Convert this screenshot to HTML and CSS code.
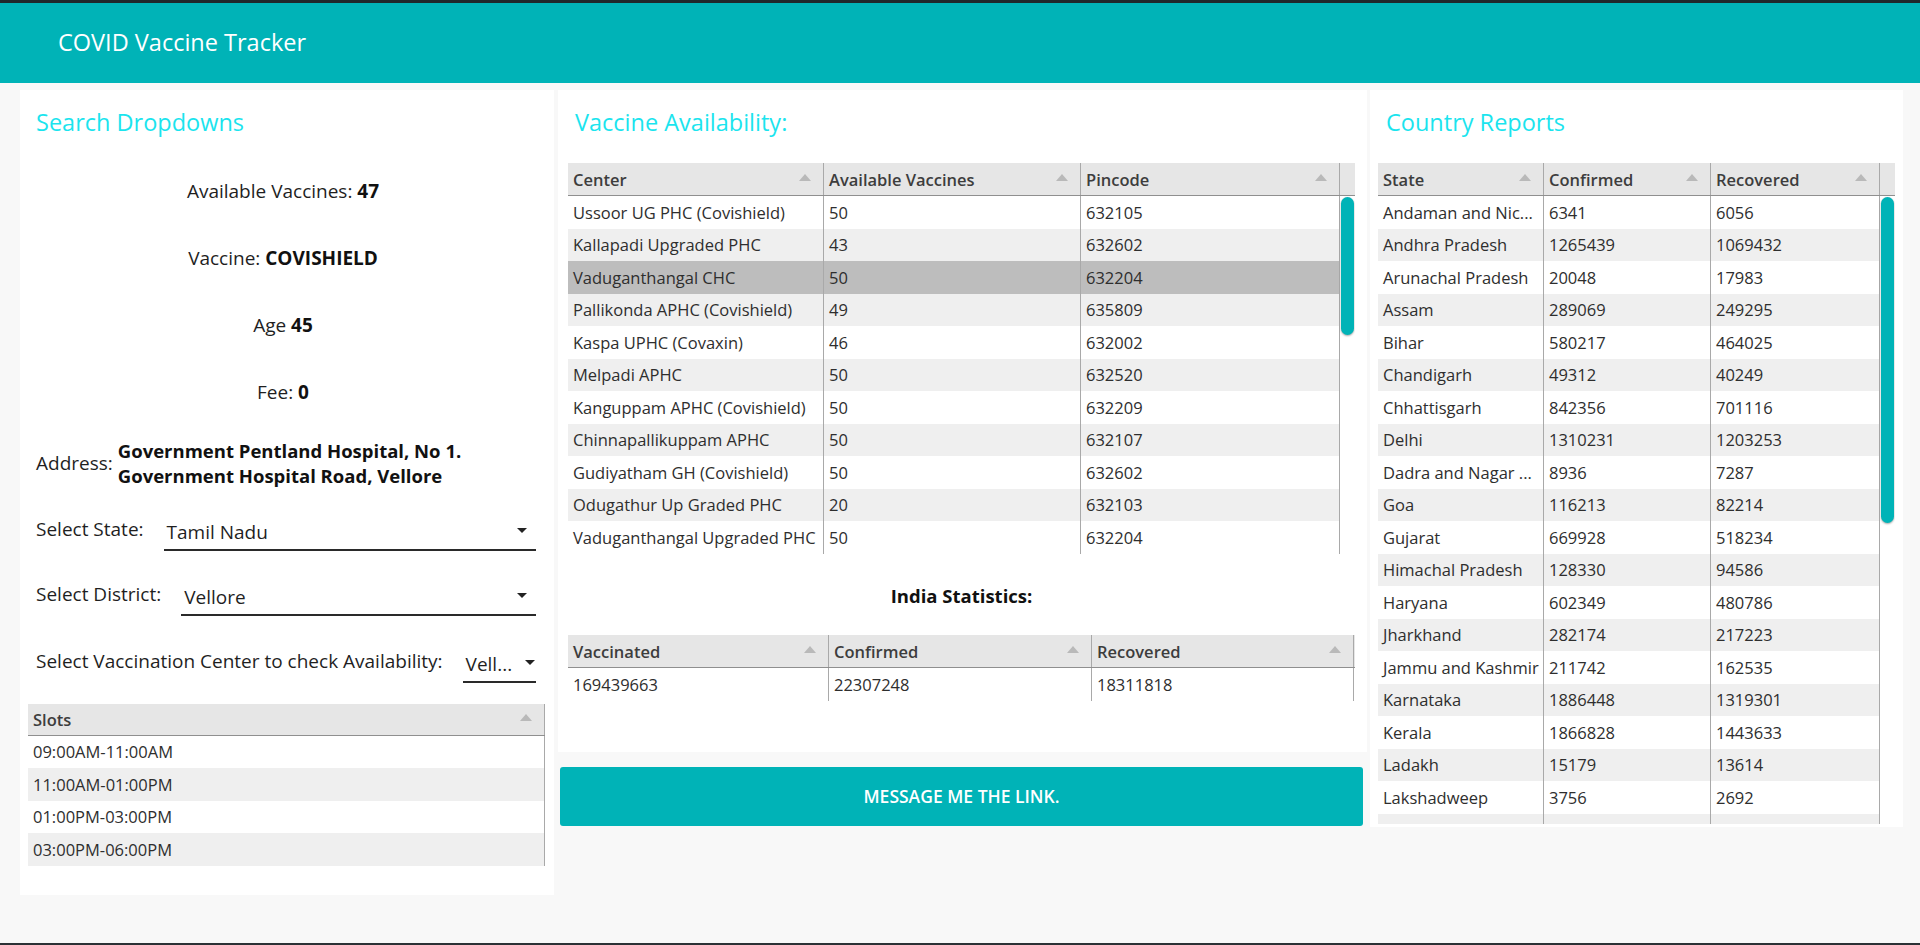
FILE: index.html
```html
<!DOCTYPE html>
<html lang="en">
<head>
<meta charset="utf-8">
<title>COVID Vaccine Tracker</title>
<link rel="stylesheet" href="styles.css">
</head>
<body>
<header class="appbar"><h1 class="app-title">COVID Vaccine Tracker</h1></header>
<main class="layout">
  <section class="panel panel-search">
    <h2 class="panel-title">Search Dropdowns</h2>
    <div class="info"><span>Available Vaccines: <b>47</b></span></div>
    <div class="info"><span>Vaccine: <b>COVISHIELD</b></span></div>
    <div class="info"><span>Age <b>45</b></span></div>
    <div class="info"><span>Fee: <b>0</b></span></div>
    <div class="address">
      <span class="address-label">Address:</span>
      <b class="address-text">Government Pentland Hospital, No 1.<br>Government Hospital Road, Vellore</b>
    </div>
    <div class="field field-state">
      <span class="field-label">Select State:</span>
      <div class="combo"><span class="combo-text">Tamil Nadu</span><span class="caret"></span></div>
    </div>
    <div class="field field-district">
      <span class="field-label">Select District:</span>
      <div class="combo"><span class="combo-text">Vellore</span><span class="caret"></span></div>
    </div>
    <div class="field field-center">
      <span class="field-label">Select Vaccination Center to check Availability:</span>
      <div class="combo combo-narrow"><span class="combo-text">Vell...</span><span class="caret"></span></div>
    </div>
    <div class="dg dg-slots">
      <div class="dg-head">
        <div class="hcell w-slot">Slots<span class="sort"></span></div>
      </div>
      <div class="dg-body">
        <div class="dg-rows">
          <div class="row"><div class="cell w-slot">09:00AM-11:00AM</div></div>
          <div class="row"><div class="cell w-slot">11:00AM-01:00PM</div></div>
          <div class="row"><div class="cell w-slot">01:00PM-03:00PM</div></div>
          <div class="row"><div class="cell w-slot">03:00PM-06:00PM</div></div>
        </div>
      </div>
    </div>
  </section>

  <div class="middle">
    <section class="panel panel-avail">
      <h2 class="panel-title">Vaccine Availability:</h2>
      <div class="dg dg-centers">
        <div class="dg-head">
          <div class="hcell w-c1">Center<span class="sort"></span></div>
          <div class="hcell w-c2">Available Vaccines<span class="sort"></span></div>
          <div class="hcell w-c3">Pincode<span class="sort"></span></div>
          <div class="hcell w-scroll"></div>
        </div>
        <div class="dg-body body-centers">
          <div class="dg-rows">
            <div class="row"><div class="cell w-c1">Ussoor UG PHC (Covishield)</div><div class="cell w-c2">50</div><div class="cell w-c3">632105</div></div>
            <div class="row"><div class="cell w-c1">Kallapadi Upgraded PHC</div><div class="cell w-c2">43</div><div class="cell w-c3">632602</div></div>
            <div class="row selected"><div class="cell w-c1">Vaduganthangal CHC</div><div class="cell w-c2">50</div><div class="cell w-c3">632204</div></div>
            <div class="row"><div class="cell w-c1">Pallikonda APHC (Covishield)</div><div class="cell w-c2">49</div><div class="cell w-c3">635809</div></div>
            <div class="row"><div class="cell w-c1">Kaspa UPHC (Covaxin)</div><div class="cell w-c2">46</div><div class="cell w-c3">632002</div></div>
            <div class="row"><div class="cell w-c1">Melpadi APHC</div><div class="cell w-c2">50</div><div class="cell w-c3">632520</div></div>
            <div class="row"><div class="cell w-c1">Kanguppam APHC (Covishield)</div><div class="cell w-c2">50</div><div class="cell w-c3">632209</div></div>
            <div class="row"><div class="cell w-c1">Chinnapallikuppam APHC</div><div class="cell w-c2">50</div><div class="cell w-c3">632107</div></div>
            <div class="row"><div class="cell w-c1">Gudiyatham GH (Covishield)</div><div class="cell w-c2">50</div><div class="cell w-c3">632602</div></div>
            <div class="row"><div class="cell w-c1">Odugathur Up Graded PHC</div><div class="cell w-c2">20</div><div class="cell w-c3">632103</div></div>
            <div class="row"><div class="cell w-c1">Vaduganthangal Upgraded PHC</div><div class="cell w-c2">50</div><div class="cell w-c3">632204</div></div>
          </div>
          <div class="scroll-track"><div class="thumb thumb-centers"></div></div>
        </div>
      </div>

      <h3 class="stats-title">India Statistics:</h3>
      <div class="dg dg-stats">
        <div class="dg-head">
          <div class="hcell w-s1">Vaccinated<span class="sort"></span></div>
          <div class="hcell w-s2">Confirmed<span class="sort"></span></div>
          <div class="hcell w-s3">Recovered<span class="sort"></span></div>
        </div>
        <div class="dg-body">
          <div class="dg-rows">
            <div class="row"><div class="cell w-s1">169439663</div><div class="cell w-s2">22307248</div><div class="cell w-s3">18311818</div></div>
          </div>
        </div>
      </div>
    </section>
    <button class="btn-message" type="button">MESSAGE ME THE LINK.</button>
  </div>

  <section class="panel panel-country">
    <h2 class="panel-title">Country Reports</h2>
    <div class="dg dg-country">
      <div class="dg-head">
        <div class="hcell w-r1">State<span class="sort"></span></div>
        <div class="hcell w-r2">Confirmed<span class="sort"></span></div>
        <div class="hcell w-r3">Recovered<span class="sort"></span></div>
        <div class="hcell w-scroll"></div>
      </div>
      <div class="dg-body body-country">
        <div class="dg-rows">
          <div class="row"><div class="cell w-r1">Andaman and Nic...</div><div class="cell w-r2">6341</div><div class="cell w-r3">6056</div></div>
          <div class="row"><div class="cell w-r1">Andhra Pradesh</div><div class="cell w-r2">1265439</div><div class="cell w-r3">1069432</div></div>
          <div class="row"><div class="cell w-r1">Arunachal Pradesh</div><div class="cell w-r2">20048</div><div class="cell w-r3">17983</div></div>
          <div class="row"><div class="cell w-r1">Assam</div><div class="cell w-r2">289069</div><div class="cell w-r3">249295</div></div>
          <div class="row"><div class="cell w-r1">Bihar</div><div class="cell w-r2">580217</div><div class="cell w-r3">464025</div></div>
          <div class="row"><div class="cell w-r1">Chandigarh</div><div class="cell w-r2">49312</div><div class="cell w-r3">40249</div></div>
          <div class="row"><div class="cell w-r1">Chhattisgarh</div><div class="cell w-r2">842356</div><div class="cell w-r3">701116</div></div>
          <div class="row"><div class="cell w-r1">Delhi</div><div class="cell w-r2">1310231</div><div class="cell w-r3">1203253</div></div>
          <div class="row"><div class="cell w-r1">Dadra and Nagar ...</div><div class="cell w-r2">8936</div><div class="cell w-r3">7287</div></div>
          <div class="row"><div class="cell w-r1">Goa</div><div class="cell w-r2">116213</div><div class="cell w-r3">82214</div></div>
          <div class="row"><div class="cell w-r1">Gujarat</div><div class="cell w-r2">669928</div><div class="cell w-r3">518234</div></div>
          <div class="row"><div class="cell w-r1">Himachal Pradesh</div><div class="cell w-r2">128330</div><div class="cell w-r3">94586</div></div>
          <div class="row"><div class="cell w-r1">Haryana</div><div class="cell w-r2">602349</div><div class="cell w-r3">480786</div></div>
          <div class="row"><div class="cell w-r1">Jharkhand</div><div class="cell w-r2">282174</div><div class="cell w-r3">217223</div></div>
          <div class="row"><div class="cell w-r1">Jammu and Kashmir</div><div class="cell w-r2">211742</div><div class="cell w-r3">162535</div></div>
          <div class="row"><div class="cell w-r1">Karnataka</div><div class="cell w-r2">1886448</div><div class="cell w-r3">1319301</div></div>
          <div class="row"><div class="cell w-r1">Kerala</div><div class="cell w-r2">1866828</div><div class="cell w-r3">1443633</div></div>
          <div class="row"><div class="cell w-r1">Ladakh</div><div class="cell w-r2">15179</div><div class="cell w-r3">13614</div></div>
          <div class="row"><div class="cell w-r1">Lakshadweep</div><div class="cell w-r2">3756</div><div class="cell w-r3">2692</div></div>
          <div class="row"><div class="cell w-r1"></div><div class="cell w-r2"></div><div class="cell w-r3"></div></div>
        </div>
        <div class="scroll-track"><div class="thumb thumb-country"></div></div>
      </div>
    </div>
  </section>
</main>
</body>
</html>
```

FILE: styles.css
```css
* { box-sizing: border-box; }

html, body {
  margin: 0;
  padding: 0;
}

body {
  height: 945px;
  overflow: hidden;
  background: #f8f8f8;
  font-family: "Open Sans", "Noto Sans", "Liberation Sans", sans-serif;
  font-size: 16.5px;
  color: #1f1f1f;
  border-bottom: 2px solid #2b3135;
}

/* ---------- app bar ---------- */
.appbar {
  height: 83px;
  background: #00b3b7;
  border-top: 3px solid #1f282b;
  display: flex;
  align-items: center;
  padding-left: 58px;
}

.app-title {
  margin: 0;
  font-size: 23.5px;
  font-weight: 400;
  color: #ffffff;
  line-height: 32px;
  padding-bottom: 3px;
}

/* ---------- layout ---------- */
.layout {
  display: flex;
  align-items: flex-start;
  padding: 7px 0 0 20px;
}

.panel {
  background: #ffffff;
}

.panel-title {
  margin: 16px 0 0 0;
  line-height: 32px;
  font-size: 23.5px;
  font-weight: 500;
  color: #1be4ee;
}

/* ---------- left panel ---------- */
.panel-search {
  width: 534px;
  height: 805px;
  padding: 0 8px;
  font-size: 19px;
}

.panel-search .panel-title { margin-left: 8px; }

.info {
  height: 67px;
  line-height: 67px;
  text-align: center;
  padding-right: 8px;
  white-space: nowrap;
}
.panel-title + .info { margin-top: 19.5px; }

.info b { font-weight: 700; color: #111; }

.address {
  margin-top: 12px;
  display: flex;
  align-items: center;
  padding-left: 8px;
  height: 50px;
}

.address-label { margin-right: 5px; }

.address-text {
  line-height: 25px;
  font-size: 18.5px;
  font-weight: 700;
  color: #111;
}

.field {
  display: flex;
  align-items: center;
  margin: 27px 10px 0 8px;
}
.field-district { margin-top: 29px; }
.field-center { margin-top: 31px; }

.field-label {
  white-space: nowrap;
  margin-right: 20px;
  padding-bottom: 8px;
}

.combo {
  flex: 1;
  height: 36px;
  display: flex;
  align-items: center;
  justify-content: space-between;
  border-bottom: 2px solid #2a2a2a;
  padding: 0 9px 0 3px;
  white-space: nowrap;
}

.combo-narrow { padding-right: 1px; }

.caret {
  flex: none;
  width: 0;
  height: 0;
  border-left: 5px solid transparent;
  border-right: 5px solid transparent;
  border-top: 5px solid #222;
  margin-bottom: 2px;
}

/* ---------- data grid ---------- */
.dg {
  font-size: 16.5px;
  color: #333;
}

.dg-head {
  display: flex;
  height: 33px;
  background: #e6e6e6;
  border-bottom: 1px solid #8f8f8f;
}

.hcell {
  display: flex;
  align-items: center;
  justify-content: space-between;
  padding: 0 12px 0 5px;
  font-weight: 600;
  color: #3d3d3d;
  border-right: 1px solid #a9a9a9;
  white-space: nowrap;
}

.sort {
  width: 0;
  height: 0;
  border-left: 6px solid transparent;
  border-right: 6px solid transparent;
  border-bottom: 7px solid #b9b9b9;
  margin-bottom: 4px;
}

.dg-body {
  display: flex;
  overflow: hidden;
}

.dg-rows { display: flex; flex-direction: column; }

.row {
  flex: none;
  display: flex;
  height: 32.5px;
  background: #ffffff;
}
.row:nth-child(even) { background: #efefef; }
.row.selected { background: #bdbdbd; }

.cell {
  display: flex;
  align-items: center;
  padding: 0 0 0 5px;
  border-right: 1px solid #a9a9a9;
  white-space: nowrap;
  overflow: hidden;
  color: #2e2e2e;
}

.w-scroll {
  width: 15px;
  padding: 0;
  border-right: none;
}

.scroll-track {
  flex: none;
  width: 15px;
  padding: 1px 1px 0 1px;
  background: #ffffff;
}

.thumb {
  width: 13px;
  background: #00b3b7;
  border-radius: 7px;
  box-shadow: 0 1px 2px rgba(0, 0, 0, 0.35);
}
.thumb-centers { height: 138px; }
.thumb-country { height: 326px; }

/* slots */
.dg-slots { width: 517px; margin-top: 21px; font-size: 16.5px; }
.dg-slots .dg-head { height: 32px; }
.w-slot { width: 517px; }

/* ---------- middle ---------- */
.middle {
  display: flex;
  flex-direction: column;
  margin-left: 4px;
  width: 809px;
}

.panel-avail {
  padding: 0 12px 51px 10px;
}
.panel-avail .panel-title { margin-left: 7px; }

.dg-centers { margin-top: 25px; }
.body-centers { height: 357.5px; }
.w-c1 { width: 256px; }
.w-c2 { width: 257px; }
.w-c3 { width: 259px; }

.stats-title {
  margin: 30.5px 0 0 0;
  text-align: center;
  font-size: 18.5px;
  line-height: 24px;
  font-weight: 700;
  color: #111;
}

.dg-stats { margin-top: 27px; }
.w-s1 { width: 261px; }
.w-s2 { width: 263px; }
.w-s3 { width: 262px; }

.btn-message {
  margin: 15px 4px 0 2px;
  height: 59px;
  border: none;
  border-radius: 3px;
  background: #00b3b7;
  color: #ffffff;
  font-family: "Open Sans", "Noto Sans", "Liberation Sans", sans-serif;
  font-size: 17.5px;
  font-weight: 600;
  cursor: pointer;
}

/* ---------- right panel ---------- */
.panel-country {
  margin-left: 3px;
  width: 533px;
  padding: 0 8px 3px 8px;
}
.panel-country .panel-title { margin-left: 8px; }

.dg-country { margin-top: 25px; }
.body-country { height: 628px; }
.w-r1 { width: 166px; }
.w-r2 { width: 167px; }
.w-r3 { width: 169px; }
```
